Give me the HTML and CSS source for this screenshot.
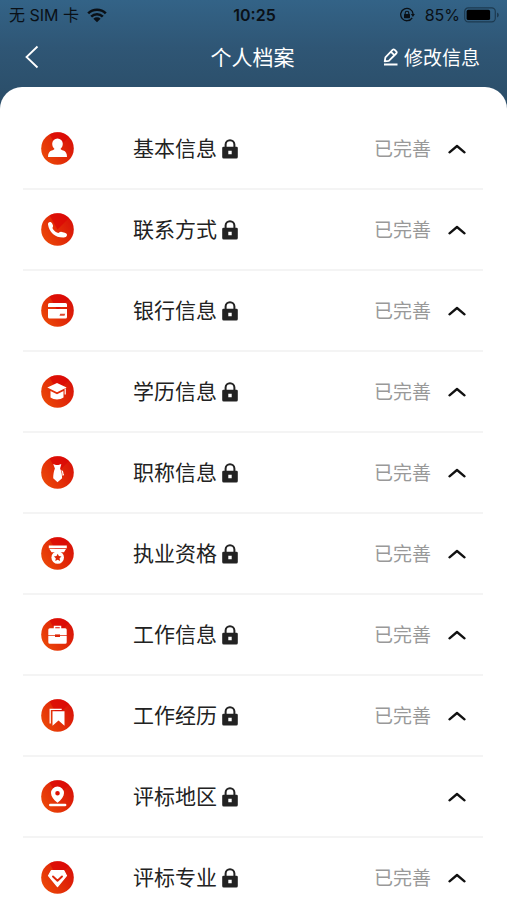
FILE: index.html
```
<!DOCTYPE html>
<html lang="zh-CN">
    <head>
        <meta charset="utf-8">
        <meta name="viewport" content="width=device-width, initial-scale=1">
        <title>个人档案</title>
        <link rel="stylesheet" href="styles.css">
    </head>
    <body>
        <!-- shared shapes -->
        <svg class="defs" aria-hidden="true">
            <defs>
                <linearGradient id="red" x1="0" y1="0.8" x2="1" y2="0.2">
                    <stop offset="0" stop-color="#ec4a08"/>
                    <stop offset="0.5" stop-color="#e22c08"/>
                    <stop offset="1" stop-color="#d81008"/>
                </linearGradient>
            </defs>
            <symbol id="disc" viewBox="0 0 33 33">
                <circle cx="16.5" cy="16.5" r="16.3" fill="url(#red)"/>
                <path d="M16.5 16.5L8.5 2.3A16.3 16.3 0 0 1 28 5z" fill="#dc0505" opacity="0.7"/>
            </symbol>
            <symbol id="lock" viewBox="0 0 16 20">
                <path d="M3.600 9V5.600a4.400 4.400 0 0 1 8.800 0V9" fill="none" stroke="#222" stroke-width="2"/>
                <path fill="#222" fill-rule="evenodd" d="M1.500 7.800h13a1.300 1.300 0 0 1 1.300 1.300v8.800a1.500 1.500 0 0 1-1.500 1.500H1.700a1.500 1.500 0 0 1-1.500-1.500V9.100A1.300 1.300 0 0 1 1.500 7.800zM6.300 11.700v3.600h3.400v-3.600z"/>
            </symbol>
            <symbol id="up" viewBox="0 0 18 10">
                <path d="M1.500 8.300L9 2l7.500 6.300" fill="none" stroke="#111" stroke-width="2.300" stroke-linecap="round" stroke-linejoin="round"/>
            </symbol>
        </svg>

        <div class="app">
            <div class="statusbar">
                <div class="carrier">
                    <span>无 SIM 卡</span>
                    <svg width="20" height="15" viewBox="0 0 20 15">
                        <path d="M1.200 5.400a12.600 12.600 0 0 1 17.600 0M4.200 8.600a8.300 8.300 0 0 1 11.600 0" fill="none" stroke="#0a1016" stroke-width="2.600"/>
                        <path d="M10 14.200L6.400 10.700a5.200 5.200 0 0 1 7.200 0z" fill="#0a1016"/>
                    </svg>
                </div>
                <div class="clock">10:25</div>
                <div class="power">
                    <svg width="16" height="16" viewBox="0 0 16 16">
                        <path d="M13.200 10.800A6.200 6.200 0 1 1 14.100 7" fill="none" stroke="#0a1016" stroke-width="1.300"/>
                        <path d="M11.900 7h4l-2 2.900z" fill="#0a1016"/>
                        <rect x="5" y="7" width="6" height="4.200" rx="0.600" fill="#0a1016"/>
                        <path d="M6.200 7.200V6a1.800 1.800 0 0 1 3.600 0v1.200" fill="none" stroke="#0a1016" stroke-width="1.100"/>
                    </svg>
                    <span class="percent">85%</span>
                    <svg width="36" height="16" viewBox="0 0 36 16">
                        <rect x="0.700" y="0.900" width="30.600" height="14" rx="3.600" fill="none" stroke="#1d3a50" stroke-width="1.200"/>
                        <rect x="2.600" y="2.800" width="23.500" height="10.200" rx="1.600" fill="#000"/>
                        <path d="M33 5.500a2.600 2.600 0 0 1 0 5z" fill="#1d3a50"/>
                    </svg>
                </div>
            </div>

            <header class="navbar">
                <button type="button" class="back" aria-label="返回">
                    <svg width="14" height="24" viewBox="0 0 14 24">
                        <path d="M12.500 1.500L1.500 12l11 10.500" fill="none" stroke="#fff" stroke-width="1.800"/>
                    </svg>
                </button>
                <h1>个人档案</h1>
                <button type="button" class="edit">
                    <svg width="16" height="18" viewBox="0 0 16 18">
                        <path d="M1.700 13.300l.7-4L9.600 1.900a1.500 1.500 0 0 1 2.100 0l1.500 1.500a1.500 1.500 0 0 1 0 2.100L5.800 12.800zM8 3.900l3.400 3.300M1 16.500h13.500" fill="none" stroke="#fff" stroke-width="1.800" stroke-linejoin="round"/>
                    </svg>
                    <span>修改信息</span>
                </button>
            </header>

            <main class="sheet">
                <ul class="sections">
                    <li><button type="button" class="row">
                        <svg class="icon" viewBox="0 0 33 33">
                            <use href="#disc"/>
                            <path fill="#fff" d="M16.500 6.500a5.300 5.300 0 0 1 5.300 5.300c0 2.200-.9 3.900-2.200 5 .2 1 1.300 1.300 2.700 1.800 2.400.8 3.700 2.900 3.700 6.400H7c0-3.500 1.300-5.600 3.700-6.400 1.400-.5 2.500-.8 2.700-1.800-1.300-1.100-2.200-2.800-2.200-5a5.300 5.300 0 0 1 5.300-5.300z"/>
                        </svg>
                        <span class="name">基本信息</span>
                        <svg class="lock"><use href="#lock"/></svg>
                        <span class="state">已完善</span>
                        <svg class="arrow"><use href="#up"/></svg>
                    </button></li>
                    <li><button type="button" class="row">
                        <svg class="icon" viewBox="0 0 33 33">
                            <use href="#disc"/>
                            <path fill="#fff" d="M7 11.400c-.2-1.400.8-2.500 2-2.500 1 0 1.700.5 2.300 1.800l.7 1.700c.4 1.100-.6 1.800-.5 2.700.4 2 3.500 4.600 5.500 4.800 1.200.1 1.700-1.200 3-1.100l3.800 1c1.600.4 2.500 1.400 2.100 2.700-.3 1.300-1.500 1.900-3.100 2C14.500 24.800 8.100 19.500 7 11.400z"/>
                        </svg>
                        <span class="name">联系方式</span>
                        <svg class="lock"><use href="#lock"/></svg>
                        <span class="state">已完善</span>
                        <svg class="arrow"><use href="#up"/></svg>
                    </button></li>
                    <li><button type="button" class="row">
                        <svg class="icon" viewBox="0 0 33 33">
                            <use href="#disc"/>
                            <path fill="#fff" d="M8.500 9h16a1.500 1.500 0 0 1 1.500 1.500V13H7v-2.500A1.500 1.500 0 0 1 8.500 9zM7 15h19v8a1.500 1.500 0 0 1-1.500 1.500h-16A1.500 1.500 0 0 1 7 23z"/>
                            <path fill="#e0482f" d="M19.200 19.800h5l-.7 2h-5z"/>
                        </svg>
                        <span class="name">银行信息</span>
                        <svg class="lock"><use href="#lock"/></svg>
                        <span class="state">已完善</span>
                        <svg class="arrow"><use href="#up"/></svg>
                    </button></li>
                    <li><button type="button" class="row">
                        <svg class="icon" viewBox="0 0 33 33">
                            <use href="#disc"/>
                            <path fill="#fff" d="M16 8l9.700 4.500-9.700 4.800-9.700-4.800zM9.500 16l6.500 3.200 6.500-3.200v6.600c-3.500 2.600-9.500 2.600-13 0z"/>
                            <path fill="none" stroke="#fff" stroke-width="1.200" d="M24.200 13.500v6"/>
                        </svg>
                        <span class="name">学历信息</span>
                        <svg class="lock"><use href="#lock"/></svg>
                        <span class="state">已完善</span>
                        <svg class="arrow"><use href="#up"/></svg>
                    </button></li>
                    <li><button type="button" class="row">
                        <svg class="icon" viewBox="0 0 33 33">
                            <use href="#disc"/>
                            <path fill="#fff" d="M12.200 8l2.800 1h2.500l2.800-1-1.200 4.600c1.400 3 2 6.200 2 9.700L16.500 26.300 12.200 22.300c0-3.500.5-6.700 1.700-9.700zM20.300 14c1.500.5 2.300 1.900 2 3.500.8.200.9 1.700.2 2l-1 .2c0-2-.4-3.900-1.200-5.700z"/>
                        </svg>
                        <span class="name">职称信息</span>
                        <svg class="lock"><use href="#lock"/></svg>
                        <span class="state">已完善</span>
                        <svg class="arrow"><use href="#up"/></svg>
                    </button></li>
                    <li><button type="button" class="row">
                        <svg class="icon" viewBox="0 0 33 33">
                            <use href="#disc"/>
                            <path fill="#fff" d="M7.800 8.500h18v2.700h-18zM8.500 12h16.500L23 15.300H10.500z"/>
                            <circle cx="16.700" cy="20.500" r="6.300" fill="#fff"/>
                            <path fill="#dc2608" d="M16.700 16.700l1.200 2.400 2.600.4-1.900 1.800.5 2.600-2.400-1.200-2.400 1.200.5-2.600-1.900-1.800 2.600-.4z"/>
                        </svg>
                        <span class="name">执业资格</span>
                        <svg class="lock"><use href="#lock"/></svg>
                        <span class="state">已完善</span>
                        <svg class="arrow"><use href="#up"/></svg>
                    </button></li>
                    <li><button type="button" class="row">
                        <svg class="icon" viewBox="0 0 33 33">
                            <use href="#disc"/>
                            <path fill="none" stroke="#fff" stroke-width="1.500" d="M13.500 11V8.600h6V11"/>
                            <path fill="#fff" d="M8.800 10.200h15.400a1.500 1.500 0 0 1 1.500 1.500v5.600H7.300v-5.600a1.500 1.500 0 0 1 1.500-1.500zM7.300 18.100h18.400v6.100a1.500 1.500 0 0 1-1.500 1.500H8.800a1.500 1.500 0 0 1-1.500-1.500z"/>
                            <path fill="#dc2608" d="M14 16.400h5v2.600h-5z"/>
                        </svg>
                        <span class="name">工作信息</span>
                        <svg class="lock"><use href="#lock"/></svg>
                        <span class="state">已完善</span>
                        <svg class="arrow"><use href="#up"/></svg>
                    </button></li>
                    <li><button type="button" class="row">
                        <svg class="icon" viewBox="0 0 33 33">
                            <use href="#disc"/>
                            <path fill="none" stroke="#fff" stroke-width="1.300" d="M9.200 24.500V10.400h11.500"/>
                            <path fill="#fff" d="M11.500 12.200h12v14.600l-6-5.300-6 5.300z"/>
                        </svg>
                        <span class="name">工作经历</span>
                        <svg class="lock"><use href="#lock"/></svg>
                        <span class="state">已完善</span>
                        <svg class="arrow"><use href="#up"/></svg>
                    </button></li>
                    <li><button type="button" class="row">
                        <svg class="icon" viewBox="0 0 33 33">
                            <use href="#disc"/>
                            <path fill="#fff" fill-rule="evenodd" d="M16.500 6.500a6.500 6.500 0 0 1 6.500 6.500c0 3.600-2.600 6.500-6.500 9.800C12.600 19.500 10 16.600 10 13a6.500 6.500 0 0 1 6.500-6.500zM16.500 11a2.300 2.300 0 1 0 0 4.600 2.300 2.300 0 0 0 0-4.600z"/>
                            <path stroke="#fff" stroke-width="2.600" stroke-linecap="round" d="M9.300 25h14.800"/>
                        </svg>
                        <span class="name">评标地区</span>
                        <svg class="lock"><use href="#lock"/></svg>
                        <span class="state"></span>
                        <svg class="arrow"><use href="#up"/></svg>
                    </button></li>
                    <li><button type="button" class="row">
                        <svg class="icon" viewBox="0 0 33 33">
                            <use href="#disc"/>
                            <path fill="#fff" stroke="#fff" stroke-width="1.200" stroke-linejoin="round" d="M10.300 9.700h12.600l2.600 5-9 10.800-9-10.800z"/>
                            <path fill="none" stroke="#dc2608" stroke-width="1.900" stroke-linecap="round" stroke-linejoin="round" d="M12 15.500l4.500 4.300 4.500-4.300"/>
                        </svg>
                        <span class="name">评标专业</span>
                        <svg class="lock"><use href="#lock"/></svg>
                        <span class="state">已完善</span>
                        <svg class="arrow"><use href="#up"/></svg>
                    </button></li>
                </ul>
            </main>
        </div>
    </body>
</html>
```

FILE: styles.css
```
* {
    box-sizing:     border-box;
}
body {
    margin:         0;
    font-family:    "Noto Sans CJK SC", sans-serif;
    color:          #222;
}
button {
    border:         none;
    background:     none;
    padding:        0;
    color:          inherit;
    font:           inherit;
    cursor:         pointer;
}
svg {
    display:        block;
    flex:           none;
}
.defs {
    position:       absolute;
    width:          0;
    height:         0;
}
.app {
    display:        flex;
    flex-direction: column;
    height:         100vh;
    background:     linear-gradient(#336387 0, #2f5675 48px, #2b4e69 100px);
}

/* status bar */
.statusbar {
    display:        grid;
    grid-template-columns: 1fr auto 1fr;
    align-items:    center;
    height:         30px;
    padding:        0 7px 0 9px;
    font-family:    Inter, "Noto Sans CJK SC", sans-serif;
    font-size:      16px;
    line-height:    24px;
    color:          #0a1016;
}
.carrier {
    display:        flex;
    align-items:    center;
    gap:            8px;
}
.clock {
    font-weight:    600;
}
.power {
    display:        flex;
    align-items:    center;
    justify-content: flex-end;
}
.percent {
    margin:         0 4px 0 10px;
}

/* title bar */
.navbar {
    display:        grid;
    grid-template-columns: 1fr auto 1fr;
    align-items:    center;
    height:         57px;
    padding:        0 27px 3px 25px;
    color:          #fff;
}
.navbar h1 {
    margin:         0;
    padding-bottom: 2px;
    font-size:      21px;
    font-weight:    400;
    line-height:    30px;
}
.back {
    justify-self:   start;
}
.edit {
    display:        flex;
    align-items:    center;
    justify-self:   end;
    gap:            5px;
    font-size:      19px;
    line-height:    28px;
}

/* list */
.sheet {
    flex:           1;
    min-height:     0;
    overflow-y:     auto;
    scrollbar-width: none;
    padding:        22px 24px 0 23px;
    background:     #fff;
    border-radius:  22px 22px 0 0;
}
.sections {
    margin:         0;
    padding:        0;
    list-style:     none;
}
.sections li {
    border-bottom:  2px solid #f4f4f4;
}
.row {
    display:        flex;
    align-items:    center;
    width:          100%;
    height:         79px;
    padding:        0 17px 0 18px;
    text-align:     left;
}
.icon {
    width:          33px;
    height:         33px;
    margin-right:   59px;
}
.name {
    padding-bottom: 3px;
    font-size:      21px;
    line-height:    30px;
}
.lock {
    width:          16px;
    height:         20px;
    margin-left:    5px;
}
.state {
    margin:         0 17px 0 auto;
    padding-bottom: 1px;
    font-size:      19px;
    line-height:    28px;
    color:          #999;
}
.arrow {
    width:          18px;
    height:         10px;
}
```
